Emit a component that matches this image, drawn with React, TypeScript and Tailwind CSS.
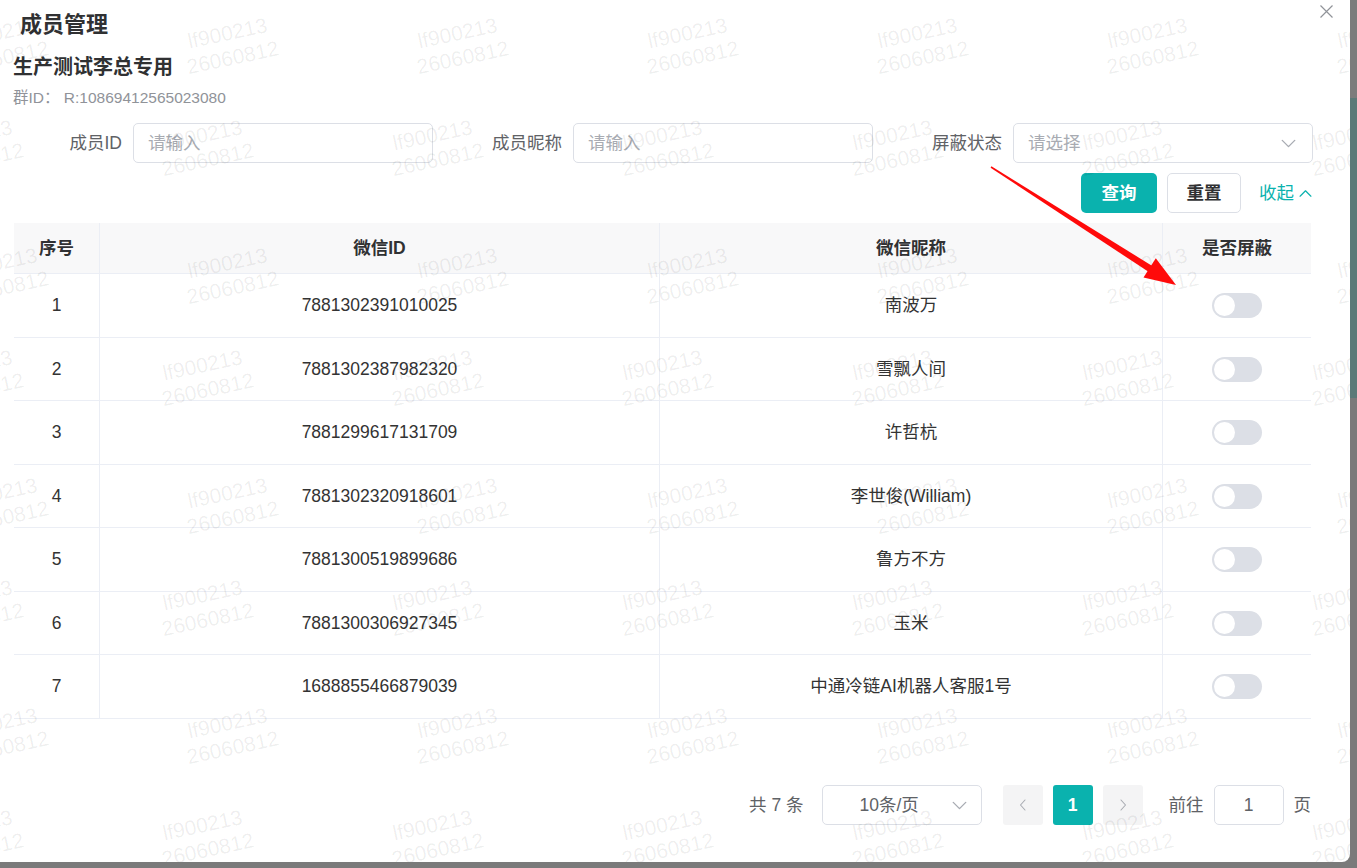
import React from "react";

const rows = [
  ["1", "7881302391010025", "南波万"],
  ["2", "7881302387982320", "雪飘人间"],
  ["3", "7881299617131709", "许哲杭"],
  ["4", "7881302320918601", "李世俊(William)"],
  ["5", "7881300519899686", "鲁方不方"],
  ["6", "7881300306927345", "玉米"],
  ["7", "1688855466879039", "中通冷链AI机器人客服1号"],
];

function Watermarks() {
  const items: { x: number; y: number }[] = [];
  for (let r = 0; r < 4; r++) {
    for (let k = 0; k < 7; k++) {
      items.push({ x: -45 + 230 * k, y: 45 + 230 * r });
      items.push({ x: -70 + 230 * k, y: 147 + 230 * r });
    }
  }
  return (
    <div className="pointer-events-none absolute inset-0 overflow-hidden">
      {items.map((p, i) => (
        <div
          key={i}
          className="absolute w-[100px] h-[50px] -rotate-12 text-center text-[21px] leading-[25px] text-[rgba(0,0,0,0.07)] whitespace-nowrap"
          style={{ left: p.x - 5, top: p.y - 25 }}
        >
          <div>lf900213</div>
          <div>26060812</div>
        </div>
      ))}
    </div>
  );
}

function Chevron({ dir, className }: { dir: "down" | "up" | "left" | "right"; className?: string }) {
  const d =
    dir === "down"
      ? "M1 3.5 L6 8.5 L11 3.5"
      : dir === "up"
      ? "M1 8.5 L6 3.5 L11 8.5"
      : dir === "left"
      ? "M8 1 L3.5 6 L8 11"
      : "M4 1 L8.5 6 L4 11";
  return (
    <svg viewBox="0 0 12 12" className={className} fill="none" stroke="currentColor" strokeWidth="1.1" strokeLinecap="round" strokeLinejoin="round">
      <path d={d} />
    </svg>
  );
}

function Toggle() {
  return (
    <div className="w-[50px] h-[25px] rounded-full bg-[#dcdfe6] flex items-center px-[2px]">
      <div className="w-[21px] h-[21px] rounded-full bg-white" />
    </div>
  );
}

function Field({ label, placeholder, select }: { label: string; placeholder: string; select?: boolean }) {
  return (
    <div className="flex items-center">
      <div className="w-[111px] pr-[11px] text-right text-[17.5px] text-[#606266]">{label}</div>
      <div className="w-[300px] h-[40px] border border-[#dcdfe6] rounded-[5px] flex items-center justify-between pl-[14px] pr-[16px] text-[17.5px] text-[#a8abb2] bg-white">
        <span>{placeholder}</span>
        {select && <Chevron dir="down" className="w-[15px] h-[15px] text-[#a8abb2]" />}
      </div>
    </div>
  );
}

export default function App() {
  const rowH = ["h-[64px]", "h-[63px]", "h-[64px]", "h-[63px]", "h-[64px]", "h-[63px]", "h-[64px]"];
  return (
    <div className="w-[1357px] h-[868px] bg-[#7a7a7a] overflow-hidden font-['Liberation_Sans','Noto_Sans_CJK_SC',sans-serif]">
      <div className="flex">
        <div className="relative w-[1350px] h-[862px] bg-white rounded-br-[8px] overflow-hidden">
          <div className="pl-[20px] pt-[10px] text-[22px] leading-[30px] font-bold text-[#303133]">成员管理</div>
          <div className="ml-[13px] mt-[13px] text-[20px] leading-[28px] font-bold text-[#303133]">生产测试李总专用</div>
          <div className="ml-[13px] mt-[7px] text-[15.5px] leading-[20px] text-[#909399] whitespace-pre">群ID： R:10869412565023080</div>

          <div className="mt-[15px] flex pl-[22px] gap-[29px] h-[40px]">
            <Field label="成员ID" placeholder="请输入" />
            <Field label="成员昵称" placeholder="请输入" />
            <Field label="屏蔽状态" placeholder="请选择" select />
          </div>

          <div className="mt-[10px] flex justify-end items-center pr-[38px] h-[40px]">
            <div className="w-[76px] h-[40px] rounded-[5px] bg-[#0ab2ae] text-white text-[17.5px] font-bold flex items-center justify-center">查询</div>
            <div className="ml-[10px] w-[74px] h-[40px] rounded-[5px] border border-[#dcdfe6] text-[#303133] text-[17.5px] font-semibold flex items-center justify-center">重置</div>
            <div className="ml-[18px] flex items-center text-[#0ab2ae] text-[17.5px] gap-[5px]">
              <span>收起</span>
              <Chevron dir="up" className="w-[13px] h-[13px]" />
            </div>
          </div>

          <div className="mt-[10px] ml-[14px] w-[1297px]">
            <div className="grid grid-cols-[86px_560px_503px_148px] h-[51px] bg-[#f8f8f9] border-b border-[#ebeef5] text-[17.5px] font-bold text-[#303133]">
              <div className="flex items-center justify-center border-r border-[#ebeef5]">序号</div>
              <div className="flex items-center justify-center border-r border-[#ebeef5]">微信ID</div>
              <div className="flex items-center justify-center border-r border-[#ebeef5]">微信昵称</div>
              <div className="flex items-center justify-center">是否屏蔽</div>
            </div>
            {rows.map((r, i) => (
              <div key={i} className={`grid grid-cols-[86px_560px_503px_148px] ${rowH[i]} border-b border-[#ebeef5] text-[17.5px] text-[#333333]`}>
                <div className="flex items-center justify-center border-r border-[#ebeef5]">{r[0]}</div>
                <div className="flex items-center justify-center border-r border-[#ebeef5]">{r[1]}</div>
                <div className="flex items-center justify-center border-r border-[#ebeef5]">{r[2]}</div>
                <div className="flex items-center justify-center">
                  <Toggle />
                </div>
              </div>
            ))}
          </div>

          <div className="mt-[66px] flex justify-end items-center pr-[39px] h-[40px] text-[17.5px] text-[#606266]">
            <span className="whitespace-pre">共 7 条</span>
            <div className="ml-[18px] w-[160px] h-[40px] border border-[#dcdfe6] rounded-[5px] flex items-center justify-between pl-[37px] pr-[14px] text-[#606266]">
              <span>10条/页</span>
              <Chevron dir="down" className="w-[15px] h-[15px] text-[#a8abb2]" />
            </div>
            <div className="ml-[21px] w-[40px] h-[40px] rounded-[3px] bg-[#f4f4f5] flex items-center justify-center text-[#a8abb2]">
              <Chevron dir="left" className="w-[12px] h-[12px]" />
            </div>
            <div className="ml-[10px] w-[40px] h-[40px] rounded-[3px] bg-[#0ab2ae] flex items-center justify-center text-white font-bold">1</div>
            <div className="ml-[10px] w-[40px] h-[40px] rounded-[3px] bg-[#f4f4f5] flex items-center justify-center text-[#a8abb2]">
              <Chevron dir="right" className="w-[12px] h-[12px]" />
            </div>
            <span className="ml-[26px]">前往</span>
            <div className="ml-[10px] w-[70px] h-[40px] border border-[#dcdfe6] rounded-[5px] flex items-center justify-center text-[#606266]">1</div>
            <span className="ml-[10px]">页</span>
          </div>

          <Watermarks />

          <svg className="absolute left-[1320px] top-[5px] w-[13px] h-[13px]" viewBox="0 0 13 13" fill="none" stroke="#909399" strokeWidth="1.2">
            <path d="M0.5 0.5 L12.5 12.5 M12.5 0.5 L0.5 12.5" />
          </svg>

          <svg className="pointer-events-none absolute left-0 top-0 w-[1350px] h-[862px]" viewBox="0 0 1350 862">
            <polygon points="990.6,167.7 991.4,166.3 1152.3,266.0 1148.5,271.8" fill="#ff0a0a" />
            <polygon points="1176,285 1143.5,277.5 1155.8,258.3" fill="#ff0a0a" />
          </svg>
        </div>
        <div className="flex flex-col w-[7px]">
          <div className="h-[98px] bg-[#7c7c7c]" />
          <div className="h-[300px] bg-[#5b7a78]" />
          <div className="flex-1 bg-[#7a7a7a]" />
        </div>
      </div>
    </div>
  );
}
